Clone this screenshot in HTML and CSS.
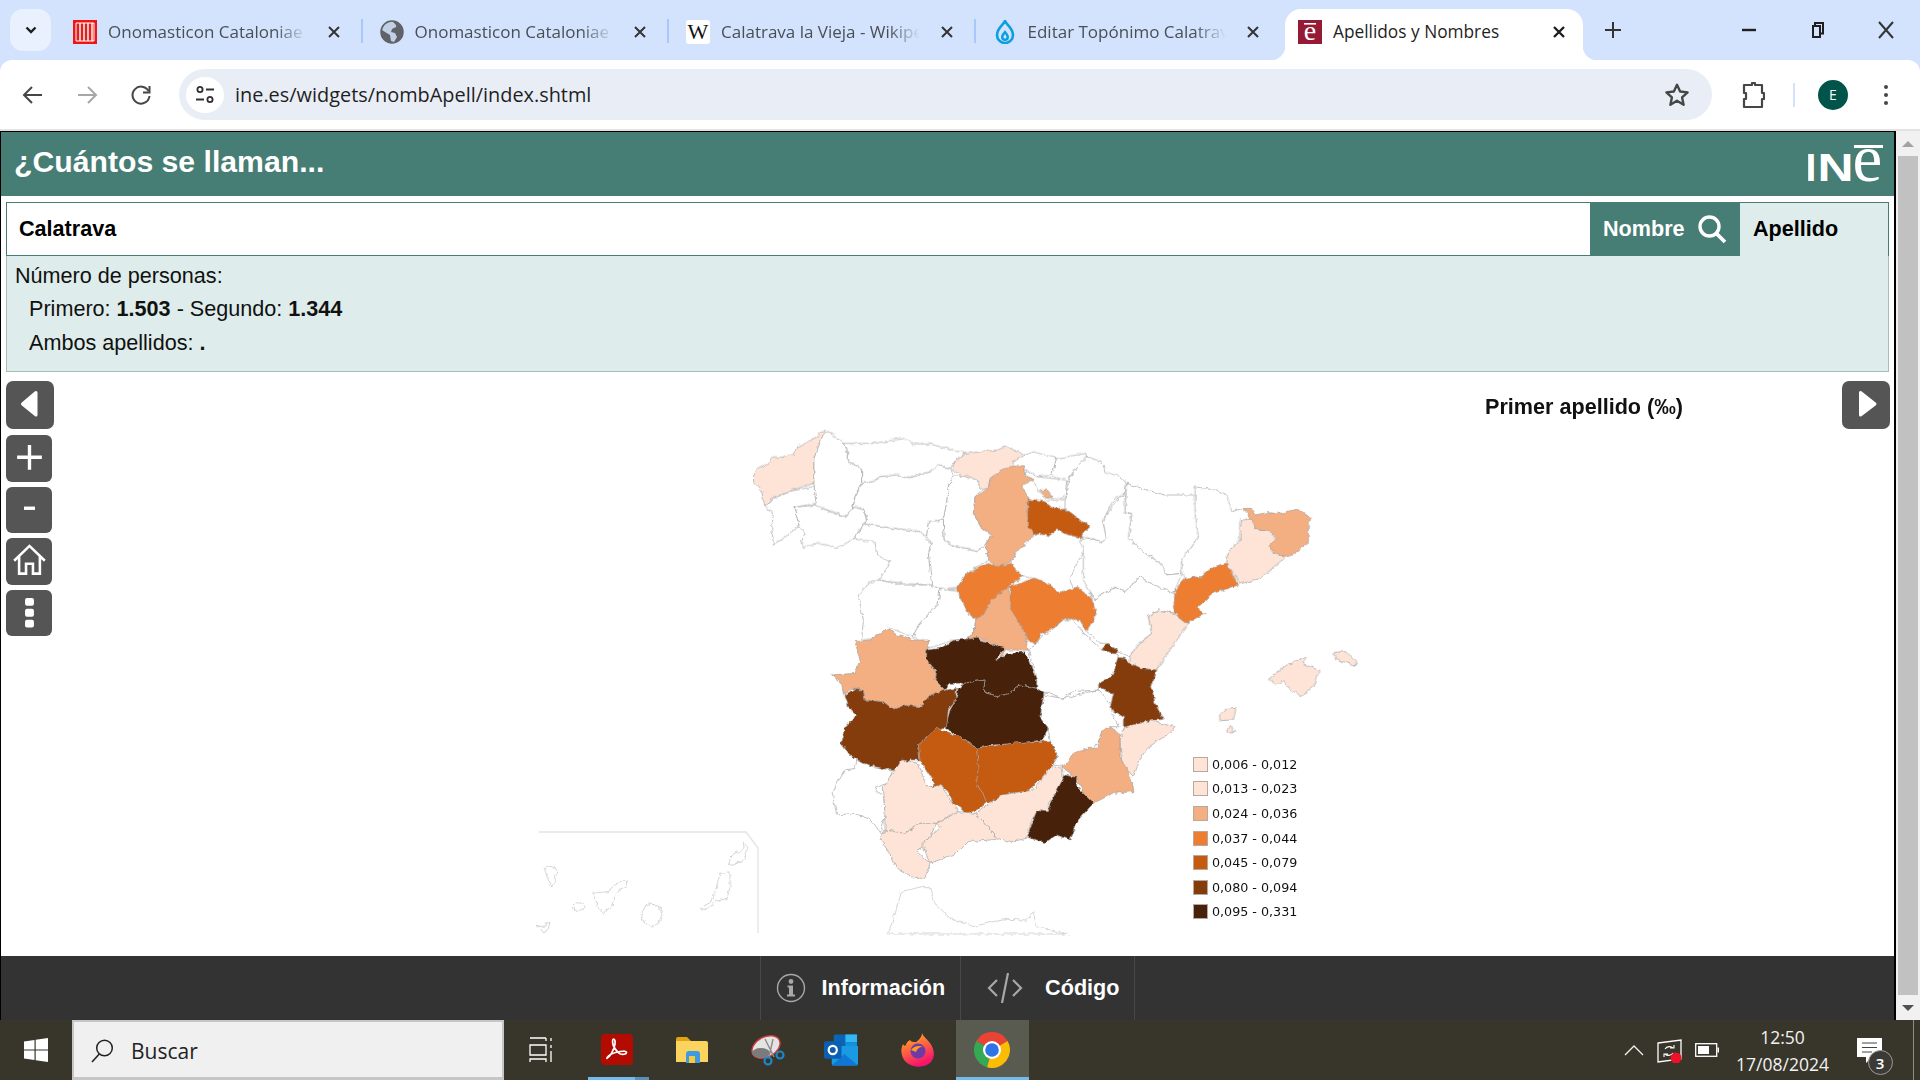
FILE: index.html
```html
<!DOCTYPE html>
<html lang="es">
<head>
<meta charset="utf-8">
<title>Apellidos y Nombres</title>
<link rel="stylesheet" href="styles.css">
</head>
<body>
<div class="tabstrip">
  <div class="tabsearch"><svg class="ico14" viewBox="0 0 14 14"><path d="M2.500 4.500 7 9l4.500-4.500" class="st3"/></svg></div>
  <div class="tab sep">
    <svg class="fav" viewBox="0 0 24 24"><rect width="24" height="24" fill="#f01414"/><path d="M3 3h18v18H3z" fill="#e02020" stroke="#fff" stroke-width="1"/><path d="M7 3v18M11 3v18M15 3v18M19 3v18" stroke="#fff" stroke-width="1.400"/></svg>
    <span class="title">Onomasticon Cataloniae</span>
    <svg class="close" viewBox="0 0 14 14"><path d="M2 2l10 10M12 2 2 12" class="st2"/></svg>
  </div>
  <div class="tab sep">
    <svg class="fav" viewBox="0 0 24 24"><circle cx="12" cy="12" r="11" fill="#5f6368"/><path d="M12 1c3 3 5 4 4 6l-4 2-1 3 4 1 2 4-3 5-3-1-1-6-5-3-3-2c1-5 5-8 10-9z" fill="#d3e3fd" opacity=".85"/><circle cx="12" cy="12" r="11" fill="none" stroke="#5f6368" stroke-width="1.500"/></svg>
    <span class="title">Onomasticon Cataloniae</span>
    <svg class="close" viewBox="0 0 14 14"><path d="M2 2l10 10M12 2 2 12" class="st2"/></svg>
  </div>
  <div class="tab sep">
    <svg class="fav" viewBox="0 0 24 24"><rect width="24" height="24" rx="3" fill="#fff"/><text x="12" y="19" text-anchor="middle" class="favw">W</text></svg>
    <span class="title">Calatrava la Vieja - Wikipedia</span>
    <svg class="close" viewBox="0 0 14 14"><path d="M2 2l10 10M12 2 2 12" class="st2"/></svg>
  </div>
  <div class="tab">
    <svg class="fav" viewBox="0 0 24 24"><path d="M12 1c1 3 8 7 8 14a8 8 0 0 1-16 0C4 8 11 4 12 1z" fill="none" stroke="#0a9fe0" stroke-width="2.600"/><path d="M12 10c1 2 4 4 4 7a4 4 0 0 1-8 0c0-3 3-5 4-7z" fill="#0a9fe0"/><path d="M12 14c.6 1 1.500 2 1.500 3a1.500 1.500 0 0 1-3 0c0-1 1-2 1.500-3z" fill="#d3e3fd"/></svg>
    <span class="title">Editar Topónimo Calatrava</span>
    <svg class="close" viewBox="0 0 14 14"><path d="M2 2l10 10M12 2 2 12" class="st2"/></svg>
  </div>
  <div class="tab active">
    <svg class="fav" viewBox="0 0 24 24"><rect width="24" height="24" fill="#951a33"/><rect x="6" y="3" width="12" height="1.600" fill="#fff"/><text x="12" y="20" text-anchor="middle" class="fave">e</text></svg>
    <span class="title">Apellidos y Nombres</span>
    <svg class="close" viewBox="0 0 14 14"><path d="M2 2l10 10M12 2 2 12" class="st3"/></svg>
  </div>
  <div class="newtab"><svg class="ico18" viewBox="0 0 18 18"><path d="M9 1v16M1 9h16" class="st2"/></svg></div>
  <div class="wincontrols">
    <div class="winbtn"><svg class="ico16" viewBox="0 0 16 16"><path d="M1 8h14" class="st3"/></svg></div>
    <div class="winbtn"><svg class="ico16" viewBox="0 0 16 16"><path d="M5 4V1h8v10.500h-3M3 4h7v11H3z" fill="none" stroke="#1f1f1f" stroke-width="2"/></svg></div>
    <div class="winbtn"><svg class="ico18" viewBox="0 0 18 18"><path d="M2 1l14 16M16 1 2 17" class="st2"/></svg></div>
  </div>
</div>

<div class="toolbar">
  <div class="navbtn"><svg class="ico22" viewBox="0 0 22 22"><path d="M20 11H3M10 3l-8 8 8 8" class="st4"/></svg></div>
  <div class="navbtn"><svg class="ico22" viewBox="0 0 22 22"><path d="M2 11h17M12 3l8 8-8 8" class="st5"/></svg></div>
  <div class="navbtn"><svg class="ico22" viewBox="0 0 22 22"><path d="M18.500 7A8.500 8.500 0 1 0 19.500 12" class="st4"/><path d="M19.500 2v6.500H13" class="st4"/></svg></div>
  <div class="omnibox">
    <div class="siteinfo"><svg class="ico22" viewBox="0 0 22 22"><circle cx="6" cy="5.500" r="2.600" class="st6"/><path d="M12 5.500h8M2 15.500h8" class="st6"/><circle cx="16" cy="15.500" r="2.600" class="st6"/></svg></div>
    <span class="url">ine.es/widgets/nombApell/index.shtml</span>
    <svg class="star" viewBox="0 0 24 24"><path d="M12 2.500l2.900 6.300 6.900.8-5.100 4.700 1.400 6.800L12 17.200l-6.100 3.900 1.400-6.800L2.200 9.600l6.900-.8z" fill="none" stroke="#444746" stroke-width="2.200" stroke-linejoin="round"/></svg>
  </div>
  <svg class="ext" viewBox="0 0 24 28"><path d="M8 4h3V2h3v2h7v8h2v6h-2v8H3v-8h2v-6H3V4z" fill="none" stroke="#444746" stroke-width="2.200" stroke-linejoin="round"/></svg>
  <div class="tbsep"></div>
  <div class="avatar">E</div>
  <div class="kebab"><i></i><i></i><i></i></div>
</div>

<div class="middle">
  <div class="page">
    <header class="head">
      <h1>¿Cuántos se llaman...</h1>
      <svg class="logo" viewBox="0 0 76 38">
        <text x="-2.500" y="37" class="logoa">I</text>
        <text transform="translate(9.400 37) scale(1.280 1)" class="logoa">N</text>
        <text x="44.500" y="37" class="logob">e</text>
        <rect x="46" y="1" width="29" height="3" fill="#fff"/>
      </svg>
    </header>
    <div class="search">
      <div class="field">Calatrava</div>
      <div class="opt on">Nombre
        <svg class="loupe" viewBox="0 0 30 30"><circle cx="12.500" cy="12.500" r="9.500" fill="none" stroke="#fff" stroke-width="3.400"/><path d="M19 19l9 9" stroke="#fff" stroke-width="3.800"/></svg>
      </div>
      <div class="opt last">Apellido</div>
    </div>
    <div class="info">
      <div>Número de personas:</div>
      <div class="ind">Primero: <b>1.503</b> - Segundo: <b>1.344</b></div>
      <div class="ind">Ambos apellidos: <b>.</b></div>
    </div>
    <div class="maparea">
      <svg class="map" viewBox="1 372 1893 584">
        <defs>
          <filter id="rough" x="-3%" y="-3%" width="106%" height="106%" color-interpolation-filters="sRGB">
            <feTurbulence type="fractalNoise" baseFrequency=".2" numOctaves="2" seed="4" result="n"/>
            <feDisplacementMap in="SourceGraphic" in2="n" scale="4.500" xChannelSelector="R" yChannelSelector="G"/>
          </filter>
        </defs>
        <polyline class="box" points="539,832 746,832 758,848 758,933"/>
        <g filter="url(#rough)">
        <g class="z z7" transform="translate(520 640) scale(.33333)">
          <polygon class="w t" points="73,685 88,679 102,681 110,695 105,720 95,745 85,720"/>
          <polygon class="w t" points="52,860 75,858 82,845 90,848 85,865 78,878 65,868"/>
          <polygon class="w t" points="160,795 170,785 185,787 195,800 188,812 172,815 162,808"/>
          <polygon class="w t" points="218,760 262,755 285,735 305,724 324,724 320,738 300,748 285,770 275,800 250,818 237,805"/>
          <polygon class="w t" points="362,825 380,792 415,795 426,825 415,850 395,861 375,850"/>
          <polygon class="w t" points="540,805 575,785 590,740 600,700 630,695 630,740 622,775 585,785 560,810"/>
          <polygon class="w t" points="625,675 635,645 668,628 672,608 683,625 672,660 640,675"/>
          <polygon class="w" points="1010,360 1005,385 975,390 955,425 937,460 950,525 1000,520 1050,535 1090,590 1085,565 1097,520 1090,470 1065,445 1110,425 1120,390 1070,385 1040,370"/>
        </g>
        <g class="z" transform="translate(740 420) scale(.33333)">
          <polygon class="c1" points="40,170 52,145 85,130 100,110 130,112 165,100 170,80 205,65 230,50 250,30 255,35 222,115 222,190 190,200 160,210 120,225 95,235 75,260 65,215 42,190"/>
          <polygon class="w" points="255,30 275,40 310,70 325,100 325,125 365,145 365,185 345,230 335,275 315,290 280,275 225,260 222,190 222,115"/>
          <polygon class="w" points="75,260 100,235 160,212 222,200 228,250 165,262 178,320 140,345 100,375 95,320 100,280"/>
          <polygon class="w" points="165,262 225,255 280,280 320,290 340,260 370,270 380,300 345,350 320,370 290,385 260,375 230,370 190,385 185,360 195,340 178,320"/>
          <polygon class="w" points="310,70 400,70 495,55 520,72 570,72 675,100 645,125 630,145 600,135 570,155 500,175 470,165 420,170 400,185 365,190 365,145 325,125 325,100"/>
          <polygon class="c1" points="675,100 770,90 800,80 855,105 820,125 820,140 790,145 750,180 745,205 720,210 710,180 670,168 635,150 645,125"/>
          <polygon class="w" points="365,190 400,185 420,170 470,165 500,175 570,155 600,135 630,145 640,168 625,200 620,250 610,300 565,305 560,350 540,335 460,325 375,312 380,295 370,265 340,262 345,230"/>
          <polygon class="w" points="640,168 670,168 710,180 725,210 705,230 700,280 725,325 755,345 735,375 710,395 680,385 640,380 612,360 610,300 620,250 625,200"/>
          <polygon class="w" points="855,105 880,95 950,115 935,165 890,170 860,150 820,140 820,125"/>
          <polygon class="w" points="950,115 1040,100 1045,115 1010,140 980,185 935,165"/>
          <polygon class="w" points="860,150 890,170 980,180 975,235 950,240 920,240 895,215 880,180 855,165"/>
          <polygon class="c3" points="705,230 745,205 750,175 790,145 820,138 850,140 855,165 880,180 860,190 845,195 865,235 862,310 885,345 860,370 835,390 810,425 775,440 745,420 735,375 755,345 725,325 700,280"/>
          <polygon class="c3" points="897,212 920,210 940,235 915,230"/>
          <polygon class="w" points="1040,110 1085,125 1095,155 1140,170 1160,190 1155,220 1120,240 1095,290 1090,310 1100,355 1090,367 1050,355 1025,345 1050,320 1005,290 975,268 975,235 985,185 1010,140"/>
          <polygon class="c5" points="865,238 890,240 915,245 935,262 975,268 1005,290 1050,320 1025,345 1030,355 1015,365 985,345 950,330 925,350 905,340 885,345 862,315"/>
          <polygon class="w" points="560,350 565,305 610,300 612,360 640,380 680,385 710,395 735,375 745,420 680,460 650,505 610,510 595,505 570,495 565,400 575,375"/>
          <polygon class="w" points="345,350 375,312 460,325 540,335 555,355 575,375 565,400 575,495 490,490 415,480 440,445 450,425 410,405 405,365 345,358"/>
          <polygon class="w" points="415,480 490,495 570,495 600,505 595,550 540,610 520,650 450,625 400,655 365,660 370,600 355,525 385,490"/>
          <polygon class="w" points="600,505 650,510 685,580 700,595 710,585 700,640 670,665 640,660 565,685 520,650 540,610 595,550"/>
          <polygon class="w" points="835,390 885,345 905,340 925,350 950,330 985,345 1030,355 1040,380 1010,430 990,480 1000,505 960,520 920,490 885,475 850,470 810,430"/>
          <polygon class="c3" points="805,500 815,570 855,640 865,690 800,690 770,725 795,685 720,655 670,665 700,640 710,590 725,590 750,545"/>
          <polygon class="c4" points="650,505 680,460 745,430 775,440 810,430 850,470 805,500 750,545 725,590 700,595 680,570"/>
          <polygon class="c4" points="810,500 885,475 925,490 960,520 1010,500 1060,540 1070,570 1055,630 1035,630 1020,600 975,595 945,620 900,645 890,675 860,660 855,640 815,570"/>
        </g>
        <g class="z" transform="translate(1080 480) scale(.33333)">
          <polygon class="w" points="140,10 200,30 255,45 345,45 358,100 355,170 305,240 305,280 260,285 240,250 190,215 145,175 155,100 135,100"/>
          <polygon class="w" points="135,40 135,100 155,100 145,175 190,215 240,250 260,285 305,280 285,330 270,340 210,310 180,290 135,335 110,322 60,345 45,360 30,335 10,300 10,210 0,180 30,175 70,187 80,175 70,130 75,110 110,60"/>
          <polygon class="w" points="345,20 405,30 440,45 455,95 488,85 520,120 480,125 480,180 445,215 440,250 400,260 365,290 315,295 305,270 305,240 355,170 345,100"/>
          <polygon class="w" points="45,360 60,345 110,322 135,335 180,290 210,310 280,340 290,345 300,395 280,400 235,390 205,410 215,460 175,490 150,530 115,515 85,490 62,490 20,455 50,405 30,340"/>
          <polygon class="c1" points="150,530 180,490 215,460 205,410 235,390 280,400 325,430 270,510 230,570 185,565 150,550"/>
          <polygon class="c4" points="285,330 315,295 365,290 400,260 440,250 475,315 430,330 400,340 350,385 375,400 320,430 280,395"/>
          <polygon class="c1" points="445,215 480,180 480,120 520,118 525,148 570,155 590,180 565,200 595,225 625,225 540,295 480,312 440,250"/>
          <polygon class="c3" points="488,85 515,85 525,105 560,98 600,100 650,88 680,105 695,115 685,130 685,190 625,232 585,220 565,200 590,175 570,155 525,148 520,125"/>
          <polygon class="c1" points="565,598 620,555 665,535 682,533 668,550 690,560 718,570 705,615 665,650 625,625 610,600 590,615"/>
          <polygon class="c1" points="762,517 800,515 825,540 830,558 790,545 765,535"/>
          <polygon class="c1" points="418,705 440,685 470,682 460,720 420,722"/>
          <polygon class="c1" points="440,750 450,735 465,755 445,757"/>
          <polygon class="c6" points="62,505 85,490 115,515 100,525 75,522"/>
          <polygon class="c6" points="95,530 135,535 150,550 185,565 230,570 215,620 225,670 250,718 190,725 175,750 130,740 130,710 90,685 100,640 55,620 60,590 85,575"/>
        </g>
        <g class="z" transform="translate(820 620) scale(.33333)">
          <polygon class="w" points="625,90 645,75 665,50 690,35 730,0 760,0 800,50 830,75 845,90 895,105 880,165 835,190 835,210 760,215 730,235 690,220 672,220 650,205 650,180"/>
          <polygon class="w" points="672,225 730,235 790,220 835,210 870,250 880,290 900,320 870,320 810,395 735,440 700,435 712,405 690,362 685,325 660,290"/>
          <polygon class="c3" points="105,65 150,60 205,25 230,45 285,60 325,60 320,115 350,160 345,180 375,210 330,225 300,260 250,255 220,268 190,245 135,240 130,210 95,205 70,225 65,190 35,165 105,160 120,120"/>
          <polygon class="c7" points="320,90 360,85 405,60 470,55 555,85 525,120 565,100 615,95 650,180 650,205 600,195 570,220 530,230 490,215 495,180 430,190 385,190 375,210 345,180 350,155 320,120"/>
          <polygon class="c7" points="415,205 430,190 495,180 490,215 530,230 570,220 600,195 650,205 672,220 660,290 685,325 670,360 590,370 520,375 470,385 420,350 375,325 390,270 405,245"/>
          <polygon class="c6" points="75,225 100,208 130,210 135,240 190,245 220,268 250,255 300,260 330,225 375,210 410,205 405,245 385,270 380,320 350,330 295,375 300,420 270,420 245,450 185,445 130,430 90,405 62,370 75,320 110,285 85,260"/>
          <polygon class="c5" points="295,375 350,325 420,350 470,385 475,440 470,490 500,545 470,570 440,580 400,550 380,510 360,495 320,510 345,490 300,420"/>
          <polygon class="c5" points="470,385 520,378 590,368 690,362 712,405 695,435 660,480 620,515 570,520 515,550 500,545 470,490 475,440"/>
        </g>
        <g class="z" transform="translate(880 680) scale(.33333)">
          <polygon class="c1" points="10,320 40,280 65,240 115,250 140,320 185,318 215,370 235,390 170,430 120,430 75,460 15,450 15,400"/>
          <polygon class="c1" points="235,395 285,400 340,460 355,478 265,485 230,520 150,550 130,500 110,510 150,470 180,440 170,430"/>
          <polygon class="c1" points="15,450 75,460 120,430 170,430 150,470 110,515 150,550 135,595 105,595 50,565 30,520 0,480"/>
          <polygon class="c1" points="285,400 330,370 365,345 460,330 515,260 548,265 550,310 505,370 505,395 472,392 455,420 440,475 395,485 360,478 340,460"/>
          <polygon class="c1" points="735,140 780,130 810,122 885,140 860,165 800,205 780,240 760,290 725,250 720,180"/>
          <polygon class="c3" points="548,262 580,220 625,205 650,205 665,150 690,140 720,160 720,230 755,300 762,335 700,340 640,370 610,340 590,295"/>
          <polygon class="c7" points="440,470 460,420 472,392 505,395 510,370 555,285 590,292 590,320 640,370 595,420 570,480 530,465 495,488"/>
          <polygon class="w t" points="25,762 65,635 125,620 148,620 160,665 210,715 280,740 340,725 380,718 440,720 460,698 470,740 565,762"/>
        </g>
        </g>
      </svg>
      <div class="controls">
        <div class="ctl big"><svg viewBox="0 0 48 48"><path d="M30 11.500V34L16.500 23z" class="tri"/></svg></div>
        <div class="ctl"><svg viewBox="0 0 46 47"><path d="M23.500 10v25M11 22.500h25" class="wht"/></svg></div>
        <div class="ctl"><svg viewBox="0 0 46 46"><path d="M18 21h11" class="wht"/></svg></div>
        <div class="ctl"><svg viewBox="0 0 46 47"><path d="M8 23 23.500 8 39 23M13 19v17h7V26h7v10h7V19" class="hm"/></svg></div>
        <div class="ctl"><svg viewBox="0 0 46 47"><rect x="19" y="8" width="9" height="8" rx="2" fill="#fff"/><rect x="19" y="19" width="9" height="8" rx="2" fill="#fff"/><rect x="19" y="30" width="9" height="8" rx="2" fill="#fff"/></svg></div>
      </div>
      <div class="mapright">
        <div class="maptitle">Primer apellido (‰)</div>
        <div class="ctl big"><svg viewBox="0 0 48 48"><path d="M18.500 11.500V34L33 23z" class="tri"/></svg></div>
      </div>
      <div class="legend">
        <div class="lrow"><i class="s1"></i>0,006 - 0,012</div>
        <div class="lrow"><i class="s1"></i>0,013 - 0,023</div>
        <div class="lrow"><i class="s3"></i>0,024 - 0,036</div>
        <div class="lrow"><i class="s4"></i>0,037 - 0,044</div>
        <div class="lrow"><i class="s5"></i>0,045 - 0,079</div>
        <div class="lrow"><i class="s6"></i>0,080 - 0,094</div>
        <div class="lrow"><i class="s7"></i>0,095 - 0,331</div>
      </div>
    </div>
    <footer class="foot">
      <div class="fitem">
        <svg class="fi" viewBox="0 0 30 30"><circle cx="15" cy="15" r="13.500" fill="none" stroke="#a8a8a8" stroke-width="1.400"/><circle cx="15" cy="8.500" r="2.400" fill="#a8a8a8"/><path d="M11.500 12.500h5.500v9h2v2h-8v-2h2v-7h-1.500z" fill="#a8a8a8"/></svg>
        <span>Información</span>
      </div>
      <div class="fitem">
        <svg class="fc" viewBox="0 0 36 30"><path d="M10 7 2 15l8 8M26 7l8 8-8 8M21 0l-6 30" fill="none" stroke="#a8a8a8" stroke-width="2.200"/></svg>
        <span>Código</span>
      </div>
    </footer>
  </div>
  <div class="scroll">
    <div class="arrow up"></div>
    <div class="thumb"></div>
    <div class="arrow down"></div>
  </div>
</div>

<div class="taskbar">
  <div class="start"><svg class="winlogo" viewBox="0 0 24 24"><path d="M0 3.400 10.500 2v9.500H0zM11.700 1.800 24 0v11.500H11.700zM0 12.500h10.500V22L0 20.600zM11.700 12.500H24V24l-12.300-1.800z" fill="#fff"/></svg></div>
  <div class="tsearch">
    <svg class="tsloupe" viewBox="0 0 24 24"><circle cx="14.500" cy="9" r="7.800" fill="none" stroke="#222" stroke-width="1.500"/><path d="M9.300 15 2 23" stroke="#222" stroke-width="1.600"/></svg>
    <span>Buscar</span>
  </div>
  <div class="tbtn"><svg class="tv" viewBox="0 0 24 26"><path d="M1 1h16M17 1v3M1 8h16v10H1zM1 25v-3h16v3M22 1v3M22 8v3M22 14v11" fill="none" stroke="#fff" stroke-width="1.300"/></svg></div>
  <div class="tbtn run">
    <svg class="ti" viewBox="0 0 34 32"><rect x="1" y="0" width="32" height="31" rx="4" fill="#b30b00"/><path d="M7 24c3-1 7-8 8-14 .5-3-.500-5-1.500-5s-1.500 3 0 7c2 4 5 7 7 8 2 .7 6 .4 6-1.500s-5-1.500-11 0-9 5-8.500 6.500z" fill="none" stroke="#fff" stroke-width="1.700"/></svg>
  </div>
  <div class="tbtn">
    <svg class="ti" viewBox="0 0 34 28"><path d="M1 3a2 2 0 0 1 2-2h9l4 4H1z" fill="#e0a40e"/><path d="M1 5h30a2 2 0 0 1 2 2v19H1z" fill="#fbd35f"/><path d="M11 27V18a3 3 0 0 1 3-3h8a3 3 0 0 1 3 3v9h-5v-7h-4v7z" fill="#3f9ae0"/><rect x="14" y="20" width="6" height="7" fill="#f7c93e"/></svg>
  </div>
  <div class="tbtn">
    <svg class="ti" viewBox="0 0 34 34"><ellipse cx="15" cy="14" rx="15" ry="10" transform="rotate(-28 15 14)" fill="#e4e4e4" stroke="#cb3d3d" stroke-width="1.400"/><ellipse cx="10" cy="20" rx="9" ry="5" fill="#7b7b7b"/><path d="M14 6l9 18M22 6l-4 18" stroke="#8c8c8c" stroke-width="1.400"/><circle cx="17" cy="28" r="3.500" fill="none" stroke="#1a87c8" stroke-width="2.200"/><circle cx="29" cy="22" r="3.500" fill="none" stroke="#1a87c8" stroke-width="2.200"/></svg>
  </div>
  <div class="tbtn">
    <svg class="ti out" viewBox="0 0 35 32"><rect x="10" y="0" width="24" height="16" rx="2" fill="#0c64b8"/><rect x="22" y="0" width="12" height="8" fill="#31b8f1"/><rect x="22" y="8" width="12" height="8" fill="#1490df"/><path d="M8 12h27v18a2 2 0 0 1-2 2H10a2 2 0 0 1-2-2z" fill="#1a9ae0"/><path d="M8 32l13-12 14 12z" fill="#0f78d4"/><rect x="0" y="7" width="18" height="18" rx="2" fill="#0b5fb0"/><circle cx="9" cy="16" r="4.200" fill="none" stroke="#fff" stroke-width="2.200"/></svg>
  </div>
  <div class="tbtn">
    <svg class="ti" viewBox="0 0 34 34"><defs><linearGradient id="ff" x1="0" y1="0" x2=".4" y2="1"><stop offset="0" stop-color="#ffc31a"/><stop offset=".45" stop-color="#ff7139"/><stop offset="1" stop-color="#f5156c"/></linearGradient></defs><path d="M21 0c1 3 4 5 8 10 5 7 5 14 1 19-6 6-17 6-24 1-6-5-7-13-4-19 1 2 2 2 3 1 0-2 2-4 4-5 1 2 3 2 6 2 3-2 6-5 6-9z" fill="url(#ff)"/><circle cx="17" cy="18" r="7.500" fill="#6e3aa8"/><path d="M10 17c3-4 8-5 12-3-4 0-6 2-7 5z" fill="#f9a01b"/></svg>
  </div>
  <div class="tbtn active">
    <svg class="ti chrome" viewBox="0 0 36 36"><path d="M18 18 2.400 9A18 18 0 0 1 33.600 9z" fill="#ea4335"/><path d="M18 18 13 35.300A18 18 0 0 1 2.400 9z" fill="#34a853"/><path d="M18 18 33.600 9A18 18 0 0 1 13 35.300z" fill="#fbbc05"/><circle cx="18" cy="18" r="9" fill="#fff"/><circle cx="18" cy="18" r="6.800" fill="#2f74e6"/></svg>
  </div>
  <div class="tray">
    <svg class="caret" viewBox="0 0 20 11"><path d="M1 10l9-9 9 9" fill="none" stroke="#f2f2f2" stroke-width="1.300"/></svg>
    <svg class="net" viewBox="0 0 26 24"><path d="M1 4 24 1v19L1 23z" fill="none" stroke="#fff" stroke-width="1.300"/><path d="M8 10c2-3 6-3 8-1M16 14c-2 3-6 3-8 1M13 9h4V6M11 15H7v3" fill="none" stroke="#fff" stroke-width="1.100"/><circle cx="19" cy="19" r="5.500" fill="#ee1128"/></svg>
    <svg class="batt" viewBox="0 0 24 14"><rect x=".7" y=".7" width="21" height="12.600" fill="none" stroke="#fff" stroke-width="1.300"/><rect x="3" y="3" width="11" height="8" fill="#fff"/><rect x="22.500" y="4.500" width="1.500" height="5" fill="#fff"/></svg>
    <div class="clock"><span>12:50</span><span>17/08/2024</span></div>
    <div class="notif">
      <svg class="bubble" viewBox="0 0 25 26"><path d="M0 0h25v19H15l-6 6v-6H0z" fill="#fff"/><path d="M5 5h15M5 9.500h15M5 14h10" stroke="#444" stroke-width="1.100"/></svg>
      <span class="badge">3</span>
    </div>
  </div>
</div>
</body>
</html>
```

FILE: styles.css
```css
* { box-sizing: border-box; }
html, body { margin: 0; height: 100%; }
body {
  width: 1920px; height: 1080px; overflow: hidden;
  display: flex; flex-direction: column;
  font-family: "Liberation Sans", Arial, sans-serif;
  background: #d3e3fd;
}
svg { display: block; flex: none; }
.st2 { fill: none; stroke: #333; stroke-width: 2; }
.st3 { fill: none; stroke: #1f1f1f; stroke-width: 2.400; }
.st4 { fill: none; stroke: #444746; stroke-width: 2; }
.st5 { fill: none; stroke: #a5a7a9; stroke-width: 2; }
.st6 { fill: none; stroke: #303030; stroke-width: 1.800; }
.ico14 { width: 14px; height: 14px; }
.ico16 { width: 16px; height: 16px; }
.ico18 { width: 18px; height: 18px; }
.ico22 { width: 22px; height: 22px; }

/* tab strip */
.tabstrip { height: 60px; display: flex; align-items: flex-end; flex: none; }
.tabsearch {
  width: 41px; height: 42px; margin: 0 5px 9px 10px; border-radius: 13px;
  background: #e9f1fe; display: flex; align-items: center; justify-content: center;
}
.tab {
  width: 306.500px; height: 51px; padding: 0 22px 6px 17px;
  display: flex; align-items: center; gap: 11px; position: relative;
  font-family: "Open Sans", sans-serif; font-size: 17px; color: #4a4f55;
}
.tab.sep::after {
  content: ""; position: absolute; right: 0; top: 10px; height: 24px; width: 2px; background: #a8c7fa;
}
.fav { width: 24px; height: 24px; }
.favw { font-family: "Liberation Serif", serif; font-size: 22px; fill: #111; }
.fave { font-family: "Liberation Serif", serif; font-size: 28px; fill: #fff; }
.title {
  flex: 1; white-space: nowrap; overflow: hidden;
  -webkit-mask-image: linear-gradient(90deg, #000 84%, transparent 100%);
  mask-image: linear-gradient(90deg, #000 84%, transparent 100%);
  margin-right: 9px;
}
.close { width: 14px; height: 14px; }
.tab.active {
  width: 298px; margin-left: 3px; padding-left: 13px; background: #fff; color: #1f1f1f;
  border-radius: 16px 16px 0 0; padding-right: 17px; font-size: 17.300px;
}
.tab.active .title { -webkit-mask-image: none; mask-image: none; }
.tab.active::before, .tab.active::after {
  content: ""; position: absolute; bottom: 0; width: 14px; height: 14px;
}
.tab.active::before { left: -14px; background: radial-gradient(circle at 0 0, transparent 14px, #fff 14.500px); }
.tab.active::after { right: -14px; background: radial-gradient(circle at 100% 0, transparent 14px, #fff 14.500px); }
.newtab { width: 18px; height: 18px; margin: 0 0 21px 21px; }
.wincontrols { margin-left: auto; display: flex; height: 60px; }
.winbtn { width: 68.300px; display: flex; align-items: center; justify-content: center; }

/* toolbar */
.toolbar {
  height: 71px; flex: none; background: #fff; border-radius: 12px 12px 0 0;
  border-bottom: 2px solid #e3e3e3;
  display: flex; align-items: center; padding: 0 0 0 22px;
}
.navbtn { width: 22px; height: 22px; margin-right: 32px; }
.navbtn:nth-child(3) { margin-right: 27px; }
.omnibox {
  width: 1533px; height: 51px; border-radius: 26px; background: #e9eef6;
  display: flex; align-items: center; padding: 0 22px 0 7px; flex: none;
}
.siteinfo {
  width: 38px; height: 36px; border-radius: 50%; background: #fff;
  display: flex; align-items: center; justify-content: center; margin-right: 11px;
}
.url { flex: 1; font-family: "Open Sans", sans-serif; font-size: 19.900px; color: #1f1f1f; white-space: nowrap; }
.star { width: 26px; height: 26px; }
.ext { width: 24px; height: 28px; margin-left: 29px; }
.tbsep { width: 2px; height: 24px; background: #d3e3fd; margin-left: 28px; }
.avatar {
  width: 30px; height: 30px; border-radius: 50%; background: #00544a; color: #fff; margin-left: 23px;
  font-family: "Open Sans", sans-serif; font-size: 14px; display: flex; align-items: center; justify-content: center;
}
.kebab { display: flex; flex-direction: column; gap: 4px; margin-left: 36px; }
.kebab i { width: 4px; height: 4px; border-radius: 50%; background: #444746; display: block; }

/* page */
.middle { flex: 1; display: flex; min-height: 0; }
.page {
  width: 1896px; flex: none; background: #fff; border: 1px solid #000; border-width: 1px 2px 0 1px;
  display: flex; flex-direction: column;
}
.head {
  height: 64px; flex: none; background: #467d74; display: flex; align-items: center;
  justify-content: space-between; padding: 0 10px 0 13px; color: #fff;
}
.head h1 { margin: 0 0 5px; font-size: 30.200px; font-weight: 700; }
.logo { width: 76px; height: 38px; margin-bottom: 2px; }
.logoa { font-family: "Liberation Sans", sans-serif; font-weight: 700; font-size: 39px; fill: #fff; }
.logob { font-family: "Liberation Serif", serif; font-size: 67px; fill: #fff; }
.search {
  height: 54px; margin: 6px 5px 0; display: flex; flex: none; font-size: 21.600px; font-weight: 700;
  border: 1px solid #467d74; border-bottom: 0; background: #deedeb;
}
.field { width: 1583px; flex: none; background: #fff; display: flex; align-items: center; padding-left: 12px; border-bottom: 1px solid #467d74; }
.opt { width: 150px; flex: none; display: flex; align-items: center; padding: 0 0 1px 13px; }
.opt.last { flex: 1; width: auto; }
.opt.on { background: #467d74; color: #fff; gap: 12px; }
.loupe { width: 30px; height: 30px; }
.info {
  height: 116px; flex: none; margin: 0 5px; padding: 3px 8px 0; background: #deedeb;
  border: 1px solid #a9bdb9; border-top: 0; font-size: 21.600px; line-height: 33.400px; color: #111;
}
.ind { padding-left: 14px; }
.maparea {
  flex: 1; position: relative; display: flex; justify-content: space-between; align-items: flex-start;
  padding: 9px 4px 0 5px; min-height: 0;
}
.map { position: absolute; left: 0; top: 0; width: 100%; height: 100%; filter: blur(.3px); }
.z polygon { stroke: #a0a0a0; stroke-width: 2; stroke-linejoin: round; }
.z .t { stroke: #c0c0c0; fill: #fff; }
.box { fill: none; stroke: #e3e3e3; stroke-width: 1.300; }
.w { fill: #fff; }
.c1 { fill: #fde4d7; }
.c3 { fill: #f3ae82; }
.c4 { fill: #ed7d31; }
.c5 { fill: #c55a11; }
.c6 { fill: #843c0c; }
.c7 { fill: #47210a; }
.controls { position: relative; display: flex; flex-direction: column; gap: 5px; }
.ctl { width: 46px; height: 46.500px; border-radius: 6px; background: #555; }
.ctl.big { width: 48px; height: 48px; border-radius: 7px; margin-bottom: 1px; }
.ctl svg { width: 100%; height: 100%; }
.tri { fill: #fff; stroke: #fff; stroke-width: 3; stroke-linejoin: round; }
.wht { fill: none; stroke: #fff; stroke-width: 3.400; }
.hm { fill: none; stroke: #fff; stroke-width: 2.600; }
.mapright { position: relative; display: flex; align-items: flex-start; gap: 159px; }
.maptitle { font-size: 21.600px; font-weight: 700; color: #111; margin-top: 13px; }
.legend {
  position: absolute; left: 1192px; top: 380px; display: flex; flex-direction: column;
  font-family: "DejaVu Sans", sans-serif; font-size: 12.700px; color: #111;
}
.lrow { height: 24.600px; display: flex; align-items: center; gap: 4px; }
.lrow i { width: 15px; height: 15px; border: 1px solid #b8a8a0; display: block; }
.s1 { background: #fde4d7; }
.s3 { background: #f3ae82; }
.s4 { background: #ed7d31; }
.s5 { background: #c55a11; }
.s6 { background: #843c0c; }
.s7 { background: #47210a; }
.foot {
  height: 64px; flex: none; background: #333; display: flex; justify-content: center;
  color: #fff; font-weight: 700; font-size: 21.600px;
}
.fitem { display: flex; align-items: center; border-left: 1px solid #484848; padding: 0 15px; gap: 16px; }
.fitem:last-child { border-right: 1px solid #484848; padding: 0 15px 0 26px; gap: 22px; }
.fi { width: 30px; height: 30px; }
.fc { width: 36px; height: 30px; }

/* scrollbar */
.scroll { flex: 1; background: #f1f1f1; display: flex; flex-direction: column; align-items: center; padding: 0 2px; }
.thumb { flex: 1; width: 100%; background: #c1c1c1; }
.arrow { height: 25px; flex: none; width: 100%; display: flex; align-items: center; justify-content: center; }
.arrow::before { content: ""; border: 6px solid transparent; }
.up::before { border-bottom-color: #a3a3a3; border-top-width: 0; }
.down::before { border-top-color: #505050; border-bottom-width: 0; }

/* taskbar */
.taskbar { height: 60px; flex: none; background: #38352b; display: flex; align-items: stretch; color: #fff; }
.start { width: 72px; display: flex; align-items: center; justify-content: center; }
.winlogo { width: 24px; height: 24px; }
.tsearch {
  width: 432px; background: #f0f0f0; border: 2px solid #c6c6c6; border-bottom-width: 3px; color: #222;
  display: flex; align-items: center; gap: 17px; padding: 2px 0 0 16px;
  font-family: "Open Sans", sans-serif; font-size: 21px;
}
.tsloupe { width: 24px; height: 24px; }
.tbtn { width: 75.300px; display: flex; align-items: center; justify-content: center; position: relative; }
.tv { width: 24px; height: 26px; margin-left: -2px; }
.ti { width: 34px; height: 34px; }
.run .ti { margin-left: 1px; }
.out { margin-left: -3px; }
.chrome { width: 36px; height: 36px; margin-left: -1px; }
.tbtn.run::after { content: ""; position: absolute; left: 9px; width: 61px; bottom: 0; height: 3px; background: linear-gradient(90deg, #76b9ed 77%, #5c8fb8 77%); }
.tbtn.active { background: #5a5b50; width: 73.500px; }
.tbtn.active::after { content: ""; position: absolute; left: 0; right: 0; bottom: 0; height: 3px; background: #76b9ed; }
.tray { margin-left: auto; display: flex; align-items: center; position: relative; }
.caret { width: 20px; height: 11px; margin-right: 13px; }
.net { width: 26px; height: 24px; margin-right: 12px; margin-top: 2px; }
.batt { width: 24px; height: 14px; margin-right: 4.500px; }
.clock {
  width: 118px; display: flex; flex-direction: column; align-items: center; gap: 3px;
  font-family: "Open Sans", sans-serif; font-size: 17.500px; line-height: 24px; color: #f2f2f2;
}
.notif { width: 58px; height: 60px; position: relative; margin: 0 13px 0 0; }
.bubble { position: absolute; left: 15px; top: 18px; width: 25px; height: 26px; }
.badge {
  position: absolute; left: 26px; top: 30px; width: 25px; height: 25px; border-radius: 50%;
  background: #3b3a34; border: 1px solid #9a9a9a; display: flex; align-items: center; justify-content: center;
  font-family: "Open Sans", sans-serif; font-size: 15px; font-weight: 600;
}
.tray::after { content: ""; width: 1.500px; height: 60px; background: #8d8d85; margin: 0 6px 0 0; }
```
